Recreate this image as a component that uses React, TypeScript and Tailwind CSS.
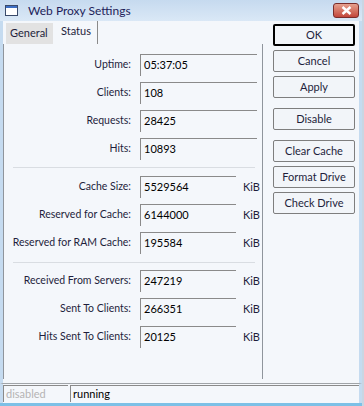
import React from 'react';

const font = { fontFamily: 'Lato, "Liberation Sans", sans-serif' };

function Field({ label, value, unit }: { label: string; value: string; unit?: boolean }) {
  return (
    <div className="flex items-center h-[22px]">
      <div className="w-[131px] text-right pr-[3px] text-[10.5px] text-[#1e1e3c] whitespace-nowrap">{label}</div>
      <div className="ml-[6px] flex items-center">
        <div
          className={`h-[22px] border-t border-l border-[#8a8a8a] pl-[3px] flex items-center text-[11px] text-black ${unit ? 'w-[96px]' : 'w-[117px]'}`}
        >
          {value}
        </div>
        {unit && <span className="ml-[7px] text-[11px] text-[#1e1e3c]">KiB</span>}
      </div>
    </div>
  );
}

function Btn({ children, primary }: { children: React.ReactNode; primary?: boolean }) {
  return (
    <button
      className={`w-[82px] h-[22px] bg-[#f2f5f9] text-[11px] text-[#1e1e3c] flex items-center justify-center rounded-[2px] ${
        primary ? 'border-2 border-black' : 'border border-[#7e7e7e]'
      }`}
    >
      {children}
    </button>
  );
}

function Separator() {
  return <div className="ml-[9px] w-[242px] h-px bg-[#d9dde2]" />;
}

export default function App() {
  return (
    <div className="w-[364px] h-[406px] bg-[#c9d6e3] overflow-hidden" style={font}>
      <div className="w-[362px] h-[406px] flex flex-col bg-[#f4f7fb]">
        {/* title bar */}
        <div className="h-[21px] flex items-center bg-gradient-to-b from-[#c6daef] to-[#dae8f6] relative">
          <div className="ml-[5px] w-[13px] h-[11px] border border-[#3a4a6a] bg-white flex flex-col">
            <div className="h-[2px] bg-[#3d6fc4]" />
          </div>
          <span className="ml-[10px] text-[12px] text-[#1e1e5a]">Web Proxy Settings</span>
          <div className="absolute right-[3px] top-[3px] w-[26px] h-[15px] rounded-[3px] border border-[#7a2d2a] bg-gradient-to-b from-[#e5a08e] to-[#c2453a] flex items-center justify-center">
            <svg width="11" height="9" viewBox="0 0 11 9">
              <path d="M1.5 1 L9.5 8 M9.5 1 L1.5 8" stroke="#fff" strokeWidth="2.4" />
            </svg>
          </div>
        </div>

        <div className="flex-1 flex border-l-[3px] border-r-[3px] border-[#c5dbf0]">
          {/* left: tabs + panel */}
          <div className="w-[260px] flex flex-col">
            <div className="h-[23px] flex items-end">
              <div className="ml-[3px] w-[47px] h-[21px] bg-[#e2e2e2] flex items-center pl-[4px] text-[11px] text-[#1e1e3c]">
                General
              </div>
              <div className="h-[23px] w-[45px] border-r border-[#8a8a8a] flex items-center pl-[8px] pb-[2px] text-[11px] text-[#1e1e3c]">
                Status
              </div>
            </div>
            <div className="h-[335px] border-l border-r border-[#8f959c] pt-[10px] flex flex-col">
              <div className="flex flex-col gap-[6px] -ml-px">
                <Field label="Uptime:" value="05:37:05" />
                <Field label="Clients:" value="108" />
                <Field label="Requests:" value="28425" />
                <Field label="Hits:" value="10893" />
              </div>
              <div className="mt-[7px] mb-[8px]"><Separator /></div>
              <div className="flex flex-col gap-[6px] -ml-px">
                <Field label="Cache Size:" value="5529564" unit />
                <Field label="Reserved for Cache:" value="6144000" unit />
                <Field label="Reserved for RAM Cache:" value="195584" unit />
              </div>
              <div className="mt-[8px] mb-[7px]"><Separator /></div>
              <div className="flex flex-col gap-[6px] -ml-px">
                <Field label="Received From Servers:" value="247219" unit />
                <Field label="Sent To Clients:" value="266351" unit />
                <Field label="Hits Sent To Clients:" value="20125" unit />
              </div>
            </div>
          </div>

          {/* right: buttons */}
          <div className="ml-[10px] pt-[3px] flex flex-col">
            <div className="flex flex-col gap-[4px]">
              <Btn primary>OK</Btn>
              <Btn>Cancel</Btn>
              <Btn>Apply</Btn>
            </div>
            <div className="mt-[10px]">
              <Btn>Disable</Btn>
            </div>
            <div className="mt-[10px] flex flex-col gap-[4px]">
              <Btn>Clear Cache</Btn>
              <Btn>Format Drive</Btn>
              <Btn>Check Drive</Btn>
            </div>
          </div>
        </div>

        {/* status bar */}
        <div className="h-[20px] border-t border-[#a0a4a8] border-l-[3px] border-l-[#c5dbf0] border-r-[3px] border-r-[#c5dbf0] flex items-end gap-[2px] pb-px">
          <div className="w-[65px] h-[17px] border-t border-l border-[#8a8a8a] pl-[2px] flex items-center text-[11px] text-[#b4b4b4]">
            disabled
          </div>
          <div className="flex-1 h-[17px] border-t border-l border-[#8a8a8a] pl-[2px] flex items-center text-[11px] text-black">
            running
          </div>
        </div>
        <div className="h-[3px] bg-[#7cc0e6]" />
      </div>
    </div>
  );
}
